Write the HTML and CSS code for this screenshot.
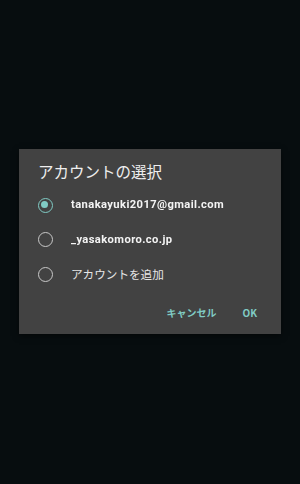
FILE: index.html
```html
<!DOCTYPE html>
<html lang="ja">
<head>
<meta charset="utf-8">
<link rel="stylesheet" href="styles.css">
</head>
<body>
<div class="screen">
  <div class="dialog">
    <div class="title">アカウントの選択</div>
    <ul class="list">
      <li class="item"><span class="radio checked"></span><span class="label masked">tanakayuki2017@gmail.com</span></li>
      <li class="item"><span class="radio"></span><span class="label masked">_yasakomoro.co.jp</span></li>
      <li class="item"><span class="radio"></span><span class="label">アカウントを追加</span></li>
    </ul>
    <div class="actions">
      <span class="btn">キャンセル</span>
      <span class="btn">OK</span>
    </div>
  </div>
</div>
</body>
</html>
```
FILE: styles.css
```css
* { box-sizing: border-box; }
html, body { margin: 0; padding: 0; }
body {
  width: 300px;
  height: 484px;
  background: #070d0f;
  font-family: "Noto Sans CJK JP", "Roboto", sans-serif;
}
.screen {
  height: 484px;
  padding: 149px 19px 0 19px;
}
.dialog {
  width: 262px;
  height: 185px;
  background: #424242;
  box-shadow: 0 2px 6px rgba(0,0,0,0.5);
  padding: 12px 0 0 0;
}
.title {
  color: #eeeeee;
  font-size: 15.5px;
  line-height: 20px;
  padding-left: 19px;
}
.list {
  list-style: none;
  margin: 7px 0 0 0;
  padding: 0;
}
.item {
  height: 34.5px;
  display: flex;
  align-items: center;
  padding-left: 19px;
}
.radio {
  width: 15px;
  height: 15px;
  border: 1.7px solid #c8c8c8;
  border-radius: 50%;
  margin-right: 18px;
  flex: none;
  position: relative;
}
.radio.checked {
  border-color: #80cbc4;
}
.radio.checked::after {
  content: "";
  position: absolute;
  left: 2.3px; top: 2.3px;
  width: 7px; height: 7px;
  border-radius: 50%;
  background: #80cbc4;
}
.label {
  color: #e6e6e6;
  font-size: 11.6px;
  line-height: 16px;
}
.masked {
  font-family: "Roboto", sans-serif;
  font-size: 11.2px;
  font-weight: 700;
  letter-spacing: 0.4px;
  color: #f4f4f4;
  filter: blur(0.5px);
}
.actions {
  display: flex;
  justify-content: flex-end;
  gap: 26px;
  padding: 14px 24px 0 0;
}
.btn {
  color: #80cbc4;
  font-size: 10px;
  font-weight: 700;
  line-height: 14px;
}
```
